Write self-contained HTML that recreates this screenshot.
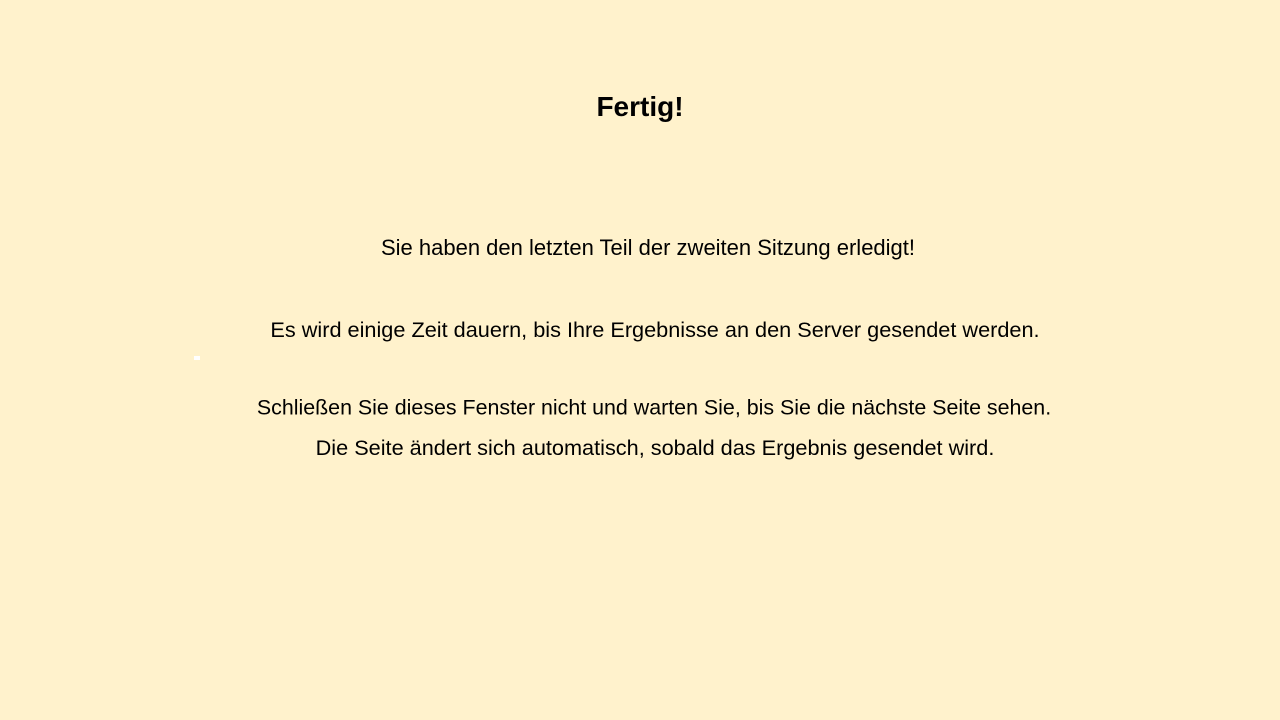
<!DOCTYPE html>
<html><head><meta charset="utf-8"><style>
html,body{margin:0;padding:0;width:1280px;height:720px;background:#FFF2CC;overflow:hidden;font-family:"Liberation Sans",sans-serif;color:#000}
.t{position:absolute;white-space:nowrap;transform:translate(-50%,-50%);font-size:21.7px;line-height:1}
</style></head><body>
<div class="t" style="left:640px;top:107px;font-size:28px;font-weight:bold">Fertig!</div>
<div class="t" style="left:648px;top:248px;font-size:22px">Sie haben den letzten Teil der zweiten Sitzung erledigt!</div>
<div class="t" style="left:655px;top:330px">Es wird einige Zeit dauern, bis Ihre Ergebnisse an den Server gesendet werden.</div>
<div class="t" style="left:654px;top:408px;font-size:21.4px">Schließen Sie dieses Fenster nicht und warten Sie, bis Sie die nächste Seite sehen.</div>
<div class="t" style="left:655px;top:448px">Die Seite ändert sich automatisch, sobald das Ergebnis gesendet wird.</div>
<div style="position:absolute;left:194px;top:356px;width:6px;height:4px;background:#fff"></div>
</body></html>
